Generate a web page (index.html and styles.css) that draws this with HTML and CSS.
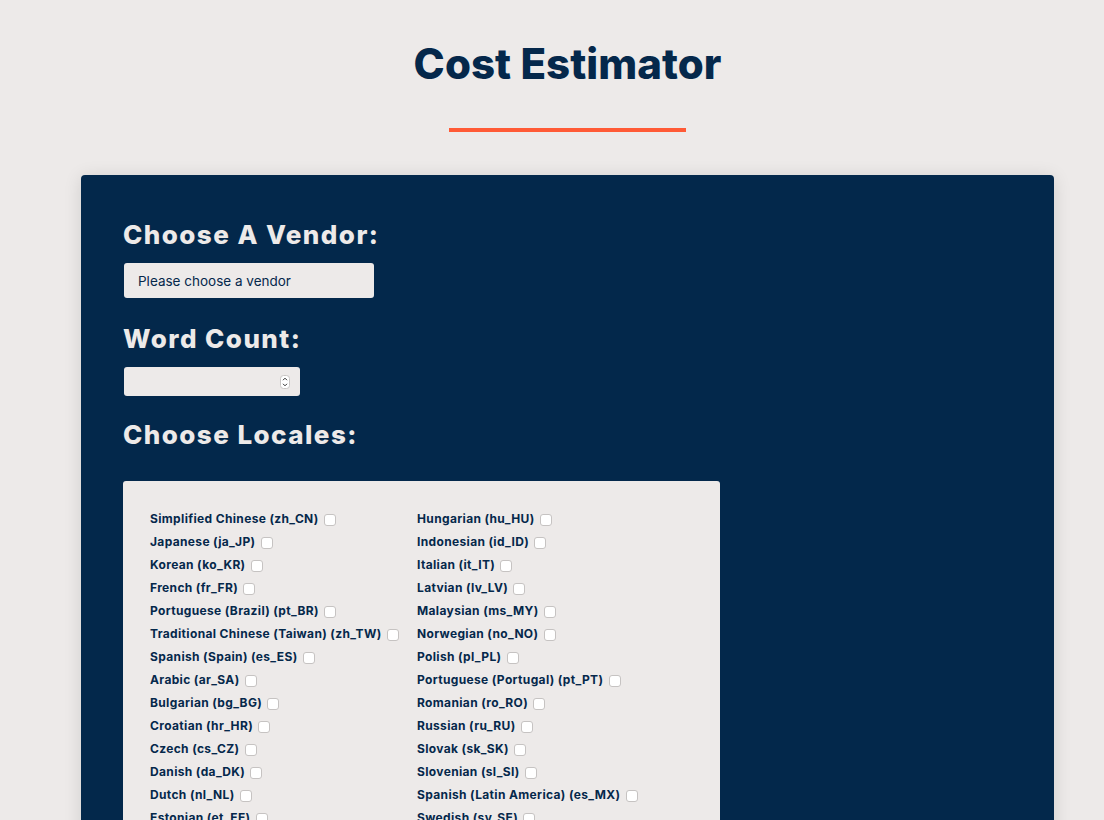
FILE: index.html
```html
<!DOCTYPE html>
<html lang="en">
<head>
<meta charset="utf-8">
<title>Cost Estimator</title>
<link rel="stylesheet" href="styles.css">
</head>
<body>
<div class="page">
  <header class="header">
    <h1 class="title">Cost Estimator</h1>
    <div class="title-bar"></div>
  </header>
  <main class="card">
    <h2 class="label label-vendor">Choose A Vendor:</h2>
    <select class="vendor-select">
      <option>Please choose a vendor</option>
    </select>
    <h2 class="label label-count">Word Count:</h2>
    <div class="number-field">
      <input class="number-input" type="text" value="">
      <svg class="spinner" width="10" height="14" viewBox="0 0 10 14" aria-hidden="true">
        <rect x="0.5" y="0.5" width="9" height="13" rx="3" fill="#ffffff" stroke="#c9c6c5"/>
        <path d="M3 5.2 L5 3.2 L7 5.2" fill="none" stroke="#333" stroke-width="1"/>
        <path d="M3 8.8 L5 10.8 L7 8.8" fill="none" stroke="#333" stroke-width="1"/>
      </svg>
    </div>
    <h2 class="label label-locales">Choose Locales:</h2>
    <div class="locales">
      <div class="locale-col">
        <label class="locale">Simplified Chinese (zh_CN) <input type="checkbox"></label>
        <label class="locale">Japanese (ja_JP) <input type="checkbox"></label>
        <label class="locale">Korean (ko_KR) <input type="checkbox"></label>
        <label class="locale">French (fr_FR) <input type="checkbox"></label>
        <label class="locale">Portuguese (Brazil) (pt_BR) <input type="checkbox"></label>
        <label class="locale">Traditional Chinese (Taiwan) (zh_TW) <input type="checkbox"></label>
        <label class="locale">Spanish (Spain) (es_ES) <input type="checkbox"></label>
        <label class="locale">Arabic (ar_SA) <input type="checkbox"></label>
        <label class="locale">Bulgarian (bg_BG) <input type="checkbox"></label>
        <label class="locale">Croatian (hr_HR) <input type="checkbox"></label>
        <label class="locale">Czech (cs_CZ) <input type="checkbox"></label>
        <label class="locale">Danish (da_DK) <input type="checkbox"></label>
        <label class="locale">Dutch (nl_NL) <input type="checkbox"></label>
        <label class="locale">Estonian (et_EE) <input type="checkbox"></label>
        <label class="locale">Finnish (fi_FI) <input type="checkbox"></label>
        <label class="locale">German (de_DE) <input type="checkbox"></label>
        <label class="locale">Greek (el_GR) <input type="checkbox"></label>
        <label class="locale">Hebrew (he_IL) <input type="checkbox"></label>
      </div>
      <div class="locale-col">
        <label class="locale">Hungarian (hu_HU) <input type="checkbox"></label>
        <label class="locale">Indonesian (id_ID) <input type="checkbox"></label>
        <label class="locale">Italian (it_IT) <input type="checkbox"></label>
        <label class="locale">Latvian (lv_LV) <input type="checkbox"></label>
        <label class="locale">Malaysian (ms_MY) <input type="checkbox"></label>
        <label class="locale">Norwegian (no_NO) <input type="checkbox"></label>
        <label class="locale">Polish (pl_PL) <input type="checkbox"></label>
        <label class="locale">Portuguese (Portugal) (pt_PT) <input type="checkbox"></label>
        <label class="locale">Romanian (ro_RO) <input type="checkbox"></label>
        <label class="locale">Russian (ru_RU) <input type="checkbox"></label>
        <label class="locale">Slovak (sk_SK) <input type="checkbox"></label>
        <label class="locale">Slovenian (sl_SI) <input type="checkbox"></label>
        <label class="locale">Spanish (Latin America) (es_MX) <input type="checkbox"></label>
        <label class="locale">Swedish (sv_SE) <input type="checkbox"></label>
        <label class="locale">Thai (th_TH) <input type="checkbox"></label>
        <label class="locale">Turkish (tr_TR) <input type="checkbox"></label>
        <label class="locale">Ukrainian (uk_UA) <input type="checkbox"></label>
        <label class="locale">Vietnamese (vi_VN) <input type="checkbox"></label>
      </div>
    </div>
  </main>
</div>
</body>
</html>
```
FILE: styles.css
```css
* { box-sizing: border-box; }

html, body {
  margin: 0;
  padding: 0;
  background: #edeae9;
  font-family: Inter, "Liberation Sans", Arial, sans-serif;
  color: #05284b;
}

.page {
  width: 973px;
  margin-left: 81px;
  padding-bottom: 40px;
}

.header {
  display: flex;
  flex-direction: column;
  align-items: center;
  padding-top: 38px;
}

.title {
  margin: 0;
  font-size: 42px;
  line-height: 51px;
  font-weight: 800;
  color: #05284b;
  letter-spacing: 0.05px;
}

.title-bar {
  width: 237px;
  height: 4px;
  background: #ff5a36;
  margin-top: 39px;
}

.card {
  margin-top: 43px;
  background: #03284b;
  border-radius: 4px;
  box-shadow: 0 2px 18px rgba(0, 0, 0, 0.12);
  padding: 44px 42px 40px 42px;
  display: flex;
  flex-direction: column;
  align-items: flex-start;
}

.label {
  margin: 0;
  font-size: 26px;
  line-height: 32px;
  font-weight: 800;
  color: #edeae9;
  letter-spacing: 1.45px;
}

.label-count { margin-top: 25px; }
.label-locales { margin-top: 23px; }

.vendor-select {
  -webkit-appearance: none;
  appearance: none;
  margin: 12px 0 0 1px;
  width: 250px;
  height: 35px;
  border: none;
  border-radius: 3px;
  background: #edeae9;
  color: #05284b;
  font-family: Inter, "Liberation Sans", Arial, sans-serif;
  font-size: 13.5px;
  padding: 0 14px;
  outline: none;
}

.number-field {
  margin: 12px 0 0 1px;
  width: 176px;
  height: 29px;
  border-radius: 3px;
  background: #edeae9;
  display: flex;
  align-items: center;
  padding: 0 10px 0 8px;
}

.number-input {
  flex: 1;
  min-width: 0;
  border: none;
  background: transparent;
  outline: none;
  font-family: Inter, "Liberation Sans", Arial, sans-serif;
  font-size: 14px;
  color: #05284b;
}

.spinner { flex: none; }

.locales {
  margin-top: 30px;
  width: 597px;
  background: #edeae9;
  border-radius: 3px;
  padding: 26px 20px 20px 27px;
  display: flex;
}

.locale-col {
  display: flex;
  flex-direction: column;
}

.locale-col:first-child { width: 267px; }

.locale {
  display: flex;
  align-items: center;
  height: 23px;
  font-size: 12px;
  font-weight: 700;
  letter-spacing: 0.35px;
  color: #05284b;
  white-space: pre;
}

.locale input {
  -webkit-appearance: none;
  appearance: none;
  width: 12px;
  height: 12px;
  margin: 3px 0 0 2px;
  border: 1px solid #c6c3c2;
  border-radius: 3px;
  background: #ffffff;
}
```
